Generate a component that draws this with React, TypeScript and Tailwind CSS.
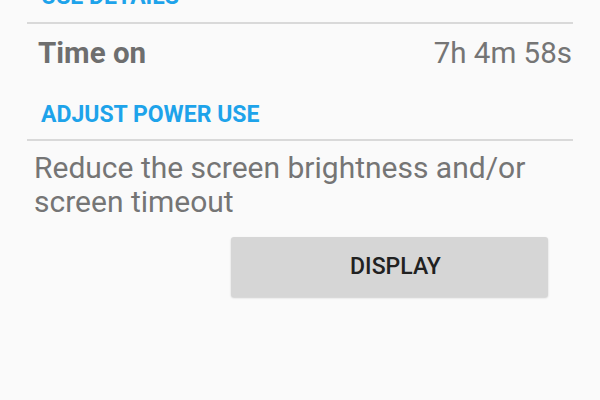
export default function App() {
  return (
    <div
      className="h-[400px] w-[600px] overflow-hidden bg-[#fafafa]"
      style={{ fontFamily: "Roboto, 'Liberation Sans', sans-serif" }}
    >
      <div className="-mt-[14px] pl-[41px] text-[23px] font-bold leading-[22px] text-[#1ea3ea]">
        USE DETAILS
      </div>
      <div className="mx-[27px] mt-[14px] h-[2px] bg-[#d9d9d9]" />

      <div className="mt-[12px] flex items-baseline justify-between pl-[38px] pr-[28px] text-[29.5px] leading-[34px] text-[#757575]">
        <span className="font-bold text-[#6e6e6e]">Time on</span>
        <span>7h 4m 58s</span>
      </div>

      <div className="mt-[34px] pl-[41px] text-[23px] font-bold leading-[22px] text-[#1ea3ea]">
        ADJUST POWER USE
      </div>
      <div className="mx-[27px] mt-[13px] h-[2px] bg-[#d9d9d9]" />

      <p className="mt-[10px] pl-[34px] pr-[30px] text-[30px] leading-[34px] text-[#757575]">
        Reduce the screen brightness and/or screen timeout
      </p>

      <div className="mt-[18px] flex justify-end pr-[52px]">
        <button className="flex h-[60px] w-[317px] items-center justify-center rounded-[3px] bg-[#d6d6d6] pl-[12px] text-[23px] font-medium text-[#212121] shadow-[0_1px_2px_rgba(0,0,0,0.18)]">
          DISPLAY
        </button>
      </div>
    </div>
  );
}
